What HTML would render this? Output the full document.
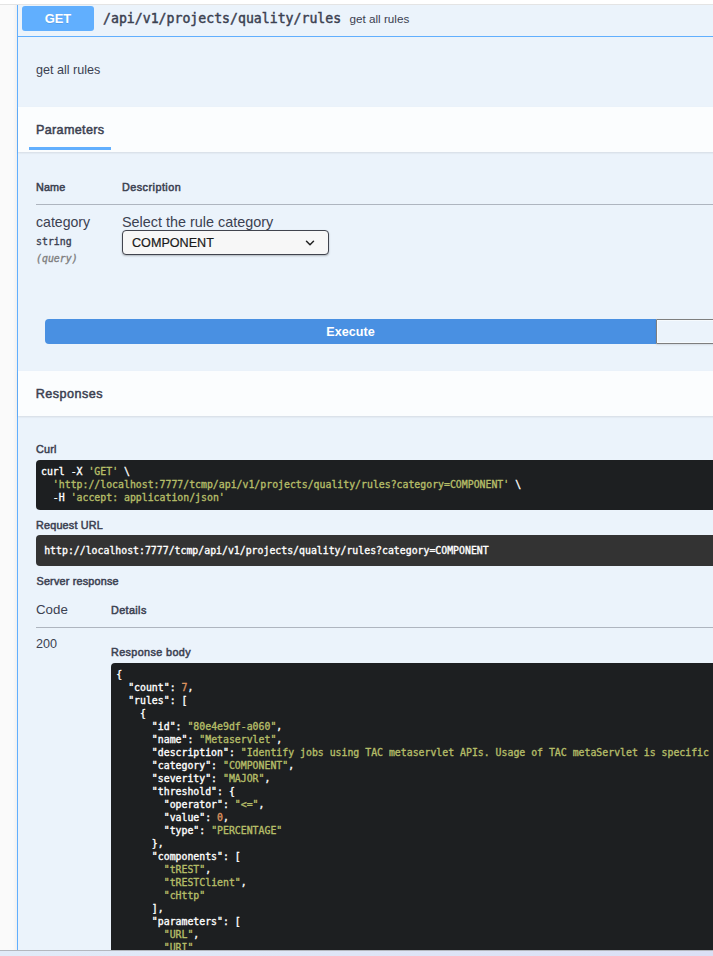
<!DOCTYPE html>
<html lang="en">
<head>
<meta charset="utf-8">
<title>Swagger UI</title>
<style>
*{box-sizing:border-box;margin:0;padding:0}
html,body{width:713px;height:956px;overflow:hidden;background:#fafafa}
body{position:relative;font-family:"Liberation Sans",Arial,sans-serif;color:#3b4151;-webkit-font-smoothing:antialiased}
.abs{position:absolute}
.mono{font-family:"DejaVu Sans Mono","Liberation Mono",monospace;font-weight:400;-webkit-text-stroke-width:0.35px}
.sans{font-family:"Liberation Sans",Arial,sans-serif}
#topstrip{left:0;top:0;width:713px;height:4px;background:#fff;border-bottom:1px solid #e4e4e4;height:5px;z-index:20}
#botstrip{left:0;top:949.6px;width:713px;height:8px;background:linear-gradient(90deg,#e1ebf8 0%,#dfe5f6 50%,#dbe0f5 100%);border-top:1.2px solid #b3b7be;z-index:20}
#opblock{left:17px;top:0;width:720px;height:1200px;background:#ebf3fb;border-left:1px solid #61affe}
#leftshadow{left:13px;top:0;width:4px;height:956px;background:linear-gradient(90deg,rgba(0,0,0,0),rgba(0,0,0,.04))}
#sumline{left:18px;top:36px;width:700px;height:1px;background:#61affe}
#get{left:22px;top:6px;width:72px;height:25px;background:#61affe;border-radius:3px;color:#fff;font-weight:700;font-size:12.9px;line-height:26px;text-align:center;text-shadow:0 1px 0 rgba(0,0,0,.1)}
#path{left:103px;top:9px;font-size:13.2px;line-height:19px;white-space:pre;color:#3b4151;-webkit-text-stroke-width:0.45px}
#sumdesc{left:349.5px;top:11px;font-size:11.7px;line-height:16px;white-space:pre}
#desc{left:36px;top:62px;font-size:12.6px;line-height:16px;white-space:pre}
.hdr{left:18px;width:700px;background:rgba(255,255,255,.8);box-shadow:0 1px 2px rgba(0,0,0,.1)}
#phdr{top:107px;height:45px}
#rhdr{top:371px;height:45px}
.h4{font-size:12.6px;font-weight:400;-webkit-text-stroke-width:0.5px;letter-spacing:0.42px;line-height:16px;white-space:pre}
#ptab{left:36px;top:122px}
#ptabline{left:29px;top:147px;width:82px;height:3px;background:#61affe}
.th{font-size:10.8px;font-weight:400;-webkit-text-stroke-width:0.5px;line-height:14px;white-space:pre}
.hr{height:1px;background:rgba(59,65,81,.35)}
#sel{left:122px;top:230px;width:207px;height:24.6px;border:1.5px solid #41444e;border-radius:4px;background:#f7f7f7;box-shadow:0 1px 2px rgba(0,0,0,.25);font-size:12.6px;line-height:24px;padding-left:9px;white-space:pre;color:#1a1a1a;-webkit-text-stroke-width:0.2px}
#exec{left:45px;top:319px;width:611px;height:24.8px;background:#4990e2;color:#fff;font-weight:700;font-size:12.6px;line-height:26px;text-align:center;border-radius:4px 0 0 4px}
#clear{left:656px;top:319px;width:80px;height:24.8px;border:1px solid #7e7e7e;border-radius:0 4px 4px 0;background:transparent;box-shadow:0 1px 2px rgba(0,0,0,.1),inset 0 0 0 1px rgba(255,255,255,.55)}
.code{background:#1d1f21;color:#fff;font-size:9.86px;line-height:13px;white-space:pre;border-radius:4px;overflow:hidden}
.s{color:#b5bd68}
.n{color:#de935f}
.lbl{font-size:10.8px;font-weight:400;-webkit-text-stroke-width:0.5px;letter-spacing:0.2px;line-height:14px;white-space:pre}
.lblb{font-size:10.8px;font-weight:400;-webkit-text-stroke-width:0.5px;letter-spacing:0.38px;line-height:14px;white-space:pre}
</style>
</head>
<body>
<div class="abs" id="leftshadow"></div>
<div class="abs" id="opblock"></div>
<div class="abs" id="topstrip"></div>
<div class="abs" id="botstrip"></div>

<div class="abs" id="get">GET</div>
<div class="abs mono" id="path">/api/v1/projects/quality/rules</div>
<div class="abs" id="sumdesc">get all rules</div>
<div class="abs" id="sumline"></div>

<div class="abs" id="desc">get all rules</div>

<div class="abs hdr" id="phdr"></div>
<div class="abs h4" id="ptab" style="letter-spacing:0.33px">Parameters</div>
<div class="abs" id="ptabline"></div>

<div class="abs th" style="left:36px;top:180px;letter-spacing:0.15px">Name</div>
<div class="abs th" style="left:122px;top:180px;letter-spacing:0.47px">Description</div>
<div class="abs hr" style="left:36px;top:204px;width:700px"></div>

<div class="abs" style="left:36px;top:213px;font-size:14.1px;line-height:18px;white-space:pre">category</div>
<div class="abs mono" style="left:36px;top:235px;font-size:9.9px;line-height:14px;white-space:pre">string</div>
<div class="abs mono" style="left:36px;top:251.5px;font-size:9.9px;line-height:14px;white-space:pre;font-style:italic;color:#808080">(query)</div>
<div class="abs" style="left:122px;top:213px;font-size:14.4px;line-height:18px;white-space:pre">Select the rule category</div>
<div class="abs" id="sel">COMPONENT</div>
<svg class="abs" style="left:304px;top:238px" width="12" height="10" viewBox="0 0 12 10"><path d="M2.5 3.3 L6 6.8 L9.5 3.3" fill="none" stroke="#222" stroke-width="1.5" stroke-linecap="round" stroke-linejoin="round"/></svg>

<div class="abs" id="exec">Execute</div>
<div class="abs" id="clear"></div>

<div class="abs hdr" id="rhdr"></div>
<div class="abs h4" style="left:35.7px;top:386px;letter-spacing:0.47px">Responses</div>

<div class="abs lbl" style="left:36px;top:442px">Curl</div>
<div class="abs code mono" style="left:36px;top:460px;width:700px;height:50px;padding:5px 5px"><span>curl -X <span class="s">'GET'</span> \
  <span class="s">'http://localhost:7777/tcmp/api/v1/projects/quality/rules?category=COMPONENT'</span> \
  -H <span class="s">'accept: application/json'</span></span></div>

<div class="abs lbl" style="left:36px;top:518px">Request URL</div>
<div class="abs code mono" style="left:36px;top:535px;width:700px;height:31px;background:#333;padding:9px 8.2px">http://localhost:7777/tcmp/api/v1/projects/quality/rules?category=COMPONENT</div>

<div class="abs lbl" style="left:36.5px;top:574px">Server response</div>

<div class="abs" style="left:36px;top:601px;font-size:13.3px;line-height:18px;white-space:pre">Code</div>
<div class="abs lblb" style="left:111px;top:603px">Details</div>
<div class="abs hr" style="left:36px;top:627px;width:700px"></div>

<div class="abs" style="left:36px;top:636px;font-size:12.6px;line-height:16px;white-space:pre">200</div>
<div class="abs lblb" style="left:111px;top:645px">Response body</div>
<div class="abs code mono" style="left:111px;top:663px;width:640px;height:300px;padding:5px 5.3px">{
  "count": <span class="n">7</span>,
  "rules": [
    {
      "id": <span class="s">"80e4e9df-a060"</span>,
      "name": <span class="s">"Metaservlet"</span>,
      "description": <span class="s">"Identify jobs using TAC metaservlet APIs. Usage of TAC metaServlet is specific to the Talend Administration Center"</span>,
      "category": <span class="s">"COMPONENT"</span>,
      "severity": <span class="s">"MAJOR"</span>,
      "threshold": {
        "operator": <span class="s">"&lt;="</span>,
        "value": <span class="n">0</span>,
        "type": <span class="s">"PERCENTAGE"</span>
      },
      "components": [
        <span class="s">"tREST"</span>,
        <span class="s">"tRESTClient"</span>,
        <span class="s">"cHttp"</span>
      ],
      "parameters": [
        <span class="s">"URL"</span>,
        <span class="s">"URI"</span>
      ]
    }
  ]
}</div>
</body>
</html>
